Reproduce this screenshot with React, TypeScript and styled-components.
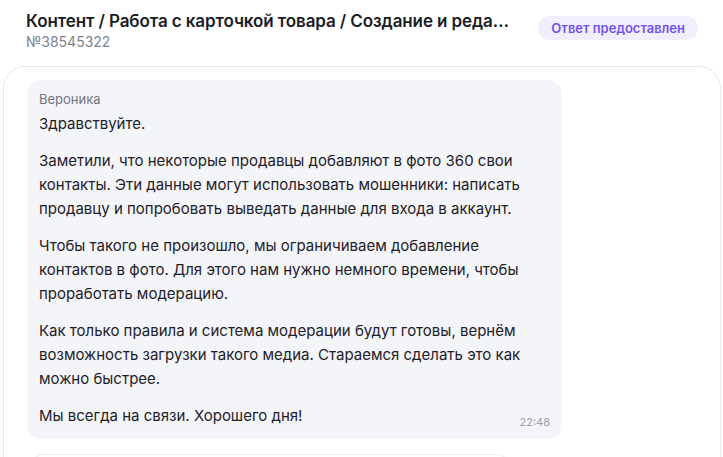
import React from 'react';
import styled, { createGlobalStyle } from 'styled-components';

const GlobalStyle = createGlobalStyle`
  html, body {
    margin: 0;
    padding: 0;
    background: #ffffff;
    overflow: hidden;
  }
  body {
    font-family: Inter, "Noto Sans", "Liberation Sans", sans-serif;
    -webkit-font-smoothing: antialiased;
  }
`;

const Page = styled.div`
  width: 723px;
  height: 457px;
  overflow: hidden;
  box-sizing: border-box;
`;

// === HEADER ===
const Header = styled.div`
  display: flex;
  align-items: flex-start;
  gap: 28px;
  padding: 10px 25px 0 26px;
`;

const TitleBlock = styled.div`
  flex: 1;
  min-width: 0;
  display: flex;
  flex-direction: column;
`;

const Title = styled.h1`
  margin: 0;
  font-size: 17px;
  line-height: 22px;
  font-weight: 600;
  color: #1b1d26;
  white-space: nowrap;
  overflow: hidden;
  text-overflow: ellipsis;
  letter-spacing: -0.1px;
`;

const TicketNumber = styled.div`
  font-size: 14px;
  line-height: 20px;
  color: #80848f;
`;

const StatusBadge = styled.span`
  flex-shrink: 0;
  margin-top: 6px;
  height: 24px;
  padding: 0 13px;
  display: inline-flex;
  align-items: center;
  border-radius: 12px;
  background: #f1eefe;
  color: #7452ef;
  font-size: 13px;
  font-weight: 600;
`;

// === CHAT CARD ===
const ChatCard = styled.div`
  margin: 14px 2px 0 3px;
  border: 1px solid #e6e9ef;
  border-radius: 22px;
  padding: 13px 23px 0 23px;
  display: flex;
  flex-direction: column;
  gap: 16px;
  height: 420px;
  box-sizing: border-box;
`;

const Bubble = styled.div`
  width: 535px;
  box-sizing: border-box;
  background: #f4f5f9;
  border-radius: 14px;
  padding: 10px 12px 11px 12px;
  display: flex;
  flex-direction: column;
  gap: 4px;
`;

const Author = styled.div`
  font-size: 13px;
  line-height: 18px;
  color: #6f7480;
`;

const Body = styled.div`
  display: flex;
  flex-direction: column;
  gap: 13px;
`;

const Paragraph = styled.p`
  margin: 0;
  font-size: 15px;
  line-height: 24px;
  color: #1e2028;
`;

const LastRow = styled.div`
  display: flex;
  align-items: flex-end;
  justify-content: space-between;
  gap: 12px;
`;

const Time = styled.span`
  font-size: 11px;
  line-height: 16px;
  color: #9a9ea8;
  margin-bottom: -2px;
`;

const NextBubble = styled.div`
  width: 480px;
  margin-left: 3px;
  height: 40px;
  background: #ffffff;
  border-radius: 14px;
  box-shadow: 0 0 0 1px #eceef2, 0 1px 4px rgba(20, 24, 40, 0.06);
  flex-shrink: 0;
`;

const paragraphs = [
  'Здравствуйте.',
  'Заметили, что некоторые продавцы добавляют в фото 360 свои контакты. Эти данные могут использовать мошенники: написать продавцу и попробовать выведать данные для входа в аккаунт.',
  'Чтобы такого не произошло, мы ограничиваем добавление контактов в фото. Для этого нам нужно немного времени, чтобы проработать модерацию.',
  'Как только правила и система модерации будут готовы, вернём возможность загрузки такого медиа. Стараемся сделать это как можно быстрее.',
];

const App: React.FC = () => {
  return (
    <>
      <GlobalStyle />
      <Page>
        <Header>
          <TitleBlock>
            <Title>Контент / Работа с карточкой товара / Создание и редактирование карточки товара</Title>
            <TicketNumber>№38545322</TicketNumber>
          </TitleBlock>
          <StatusBadge>Ответ предоставлен</StatusBadge>
        </Header>

        <ChatCard>
          <Bubble>
            <Author>Вероника</Author>
            <Body>
              {paragraphs.map((text, i) => (
                <Paragraph key={i}>{text}</Paragraph>
              ))}
              <LastRow>
                <Paragraph>Мы всегда на связи. Хорошего дня!</Paragraph>
                <Time>22:48</Time>
              </LastRow>
            </Body>
          </Bubble>
          <NextBubble />
        </ChatCard>
      </Page>
    </>
  );
};

export default App;
